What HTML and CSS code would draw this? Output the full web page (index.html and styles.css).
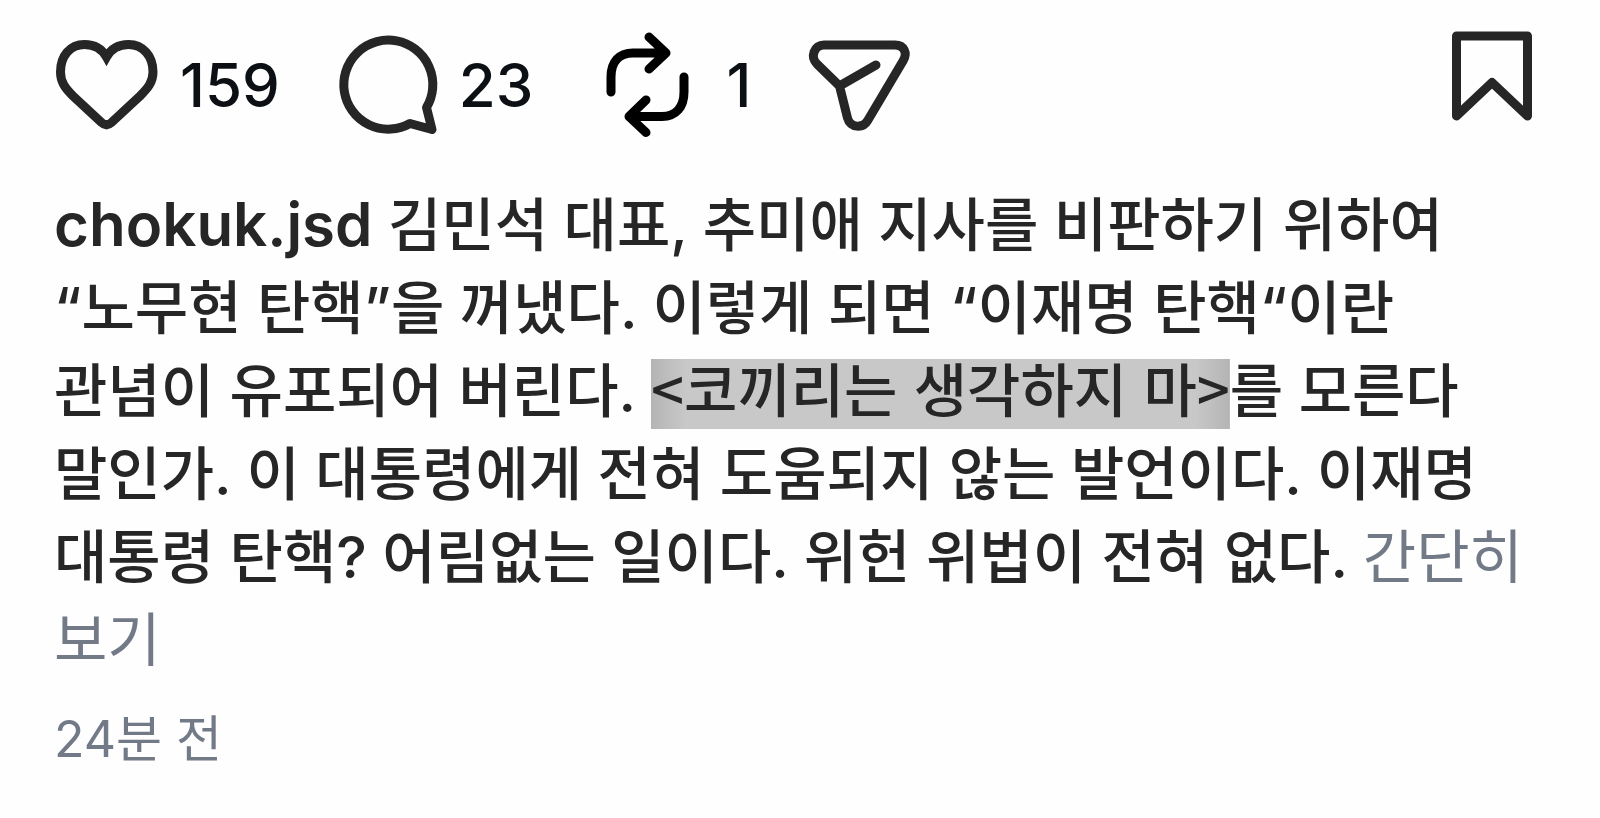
FILE: index.html
```html
<!DOCTYPE html>
<html lang="ko">
<head>
<meta charset="utf-8">
<meta name="viewport" content="width=device-width, initial-scale=1">
<title>chokuk.jsd</title>
<link rel="stylesheet" href="styles.css">
</head>
<body>
<main class="post">
  <div class="actions">
    <button class="action" type="button" aria-label="좋아요 159">
      <svg class="icon" width="106" height="106" viewBox="54 32 106 106"><path d="M106.500 57C102 49 94 44.500 84.500 44.500C70 44.500 60.500 56 60.500 72C60.500 82 65 88 73 96L101.500 122.500Q106.500 127 111.500 122.500L140 96C148 88 153 82 153 72C153 56 143 44.500 128.500 44.500C119 44.500 111 49 106.500 57Z"/></svg>
      <span class="count">159</span>
    </button>
    <button class="action" type="button" aria-label="댓글 23">
      <svg class="icon" width="102" height="106" viewBox="336 32 102 106"><path stroke-linejoin="round" d="M425.500 107.500A44.500 44.500 0 1 0 409 123.500L431 129.500Z"/></svg>
      <span class="count">23</span>
    </button>
    <button class="action" type="button" aria-label="리포스트 1">
      <svg class="icon icon-repost" width="116" height="106" viewBox="590 32 116 106"><path stroke-linejoin="round" d="M611 92V77C611 62 619 53 633 53H666M649 37L666 53L649 69M684 77V92C684 107 676 116.500 662 116.500H629M646 100L629 116.500L646 132.500"/></svg>
      <span class="count">1</span>
    </button>
    <button class="action" type="button" aria-label="공유">
      <svg class="icon" width="102" height="106" viewBox="808 32 102 106"><path stroke-linejoin="round" d="M824 45H895C904 45 908 53 903 61L868 120C863 129 850 128 847.500 118L839.500 86L817 64C810 57 814 45 824 45ZM839.500 86L876 65"/></svg>
    </button>
    <button class="action action-save" type="button" aria-label="저장">
      <svg class="icon" width="80" height="106" viewBox="1452 32 80 106"><path stroke-linejoin="round" d="M1456.500 36H1527.500V116L1492 82.500L1456.500 116Z"/></svg>
    </button>
  </div>
  <p class="caption"><a class="author" href="#">chokuk.jsd</a> 김민석 대표, 추미애 지사를 비판하기 위하여 “노무현 탄핵”을 꺼냈다. 이렇게 되면 “이재명 탄핵“이란 관념이 유포되어 버린다. <mark class="highlight">&lt;코끼리는 생각하지 마&gt;</mark>를 모른다 말인가. 이 대통령에게 전혀 도움되지 않는 발언이다. 이재명 대통령 탄핵? 어림없는 일이다. 위헌 위법이 전혀 없다. <a class="less" href="#">간단히 보기</a></p>
  <time class="time">24분 전</time>
</main>
</body>
</html>
```
FILE: styles.css
```css
* {
  box-sizing: border-box;
}

body {
  margin: 0;
  background: #fefefe;
  color: #262626;
  font-family: "Inter", "Noto Sans CJK KR", sans-serif;
}

.post {
  padding: 32px 68px 32px 54px;
}

.actions {
  display: flex;
  align-items: center;
  gap: 57px;
}

.action {
  display: flex;
  align-items: center;
  gap: 20px;
  padding: 0;
  border: 0;
  background: none;
  color: #0c1014;
  font: inherit;
}

.action-save {
  margin-left: auto;
}

.icon {
  overflow: visible;
  fill: none;
  stroke: #262626;
  stroke-width: 9;
  stroke-linecap: round;
}

.icon-repost {
  stroke: #000;
}

.count {
  font-size: 60px;
  font-weight: 500;
  line-height: 72px;
}

.caption {
  margin: 46px 0 0;
  font-size: 58px;
  font-weight: 500;
  line-height: 83px;
  word-break: keep-all;
}

.author {
  color: inherit;
  font-size: 60px;
  font-weight: 600;
  line-height: 60px;
  text-decoration: none;
}

.highlight {
  background: linear-gradient(90deg, #b4b4b4, #c8c8c8 6%, #c8c8c8 94%, #b4b4b4) bottom / 100% 70px no-repeat;
  color: inherit;
  font-family: "Noto Sans CJK KR", sans-serif;
  line-height: 70px;
}

.less {
  color: #737a87;
  font-weight: 400;
  text-decoration: none;
}

.time {
  display: block;
  margin-top: 27px;
  color: #737a87;
  font-size: 50px;
  line-height: 60px;
}
```
